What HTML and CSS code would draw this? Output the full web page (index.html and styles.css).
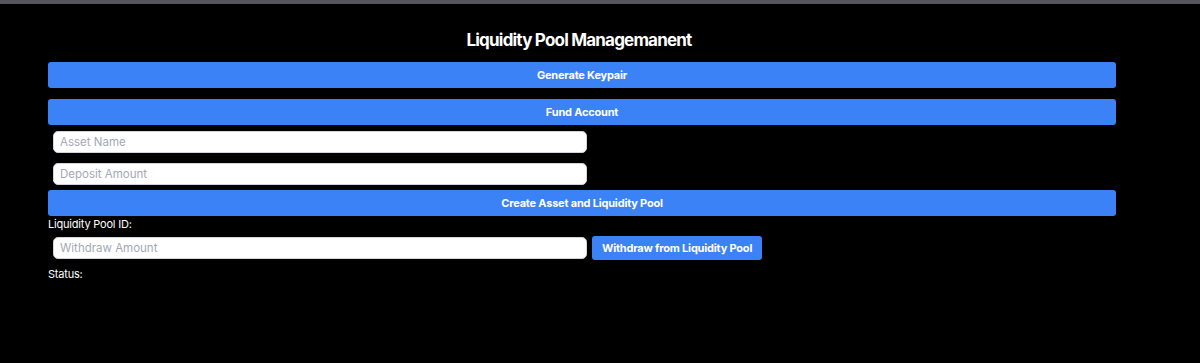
FILE: index.html
```html
<html>
  <head>
    <title>Liquidity Pool Management</title>
    <link rel="stylesheet" href="styles.css">
  </head>
  <body>
    <div class="top-bar"></div>
    <div class="pool-container">
      <h1 class="pool-title">Liquidity Pool Managemanent</h1>

      <button class="action-btn keypair-btn">Generate Keypair</button>
      <button class="action-btn fund-btn">Fund Account</button>

      <input type="text" class="pool-input" placeholder="Asset Name" />
      <input type="text" class="pool-input" placeholder="Deposit Amount" />

      <button class="action-btn">Create Asset and Liquidity Pool</button>

      <p class="info-line">Liquidity Pool ID:</p>

      <div class="withdraw-row">
        <input type="text" class="pool-input" placeholder="Withdraw Amount" />
        <button class="withdraw-btn">Withdraw from Liquidity Pool</button>
      </div>

      <p class="info-line status-line">Status:</p>
    </div>
  </body>
</html>
```

FILE: styles.css
```css
:root {
  --bg: #000000;
  --bar: #56565c;
  --blue: #3b82f6;
  --white: #ffffff;
  --placeholder: #a3a8b4;
}
* {
  box-sizing: border-box;
  margin: 0;
  padding: 0;
}
body {
  background: var(--bg);
  color: var(--white);
  font-family: Inter, "Noto Sans", Arial, sans-serif;
  letter-spacing: -0.2px;
  height: 363px;
}

.top-bar {
  height: 4px;
  background: var(--bar);
}

.pool-container {
  width: 1068px;
  margin-left: 48px;
  display: flex;
  flex-direction: column;
  align-items: flex-start;
}

.pool-title {
  align-self: stretch;
  text-align: center;
  font-size: 17px;
  line-height: 24px;
  font-weight: 700;
  letter-spacing: -0.8px;
  margin-top: 24px;
  margin-bottom: 10px;
  padding-right: 6px;
}

.action-btn {
  width: 100%;
  height: 26px;
  border: none;
  border-radius: 3px;
  background: var(--blue);
  color: var(--white);
  font-family: inherit;
  letter-spacing: inherit;
  font-size: 11px;
  font-weight: 700;
  cursor: pointer;
}

.keypair-btn {
  margin-bottom: 11px;
}

.fund-btn {
  margin-bottom: 1px;
}

.pool-input {
  width: 534px;
  height: 22px;
  margin: 5px;
  padding: 0 6px;
  border: 1px solid #d1d5db;
  border-radius: 5px;
  background: var(--white);
  font-family: inherit;
  letter-spacing: 0;
  font-size: 11.5px;
  outline: none;
}

.pool-input::placeholder {
  color: var(--placeholder);
}

.info-line {
  font-size: 11px;
  line-height: 16px;
}

.withdraw-row {
  display: flex;
  align-items: center;
  margin-top: 4px;
}

.withdraw-row .pool-input {
  margin: 0 5px;
}

.withdraw-btn {
  height: 24px;
  padding: 0 10px;
  border: none;
  border-radius: 3px;
  background: var(--blue);
  color: var(--white);
  font-family: inherit;
  letter-spacing: inherit;
  font-size: 11px;
  font-weight: 700;
  cursor: pointer;
}

.status-line {
  margin-top: 6px;
}
```
